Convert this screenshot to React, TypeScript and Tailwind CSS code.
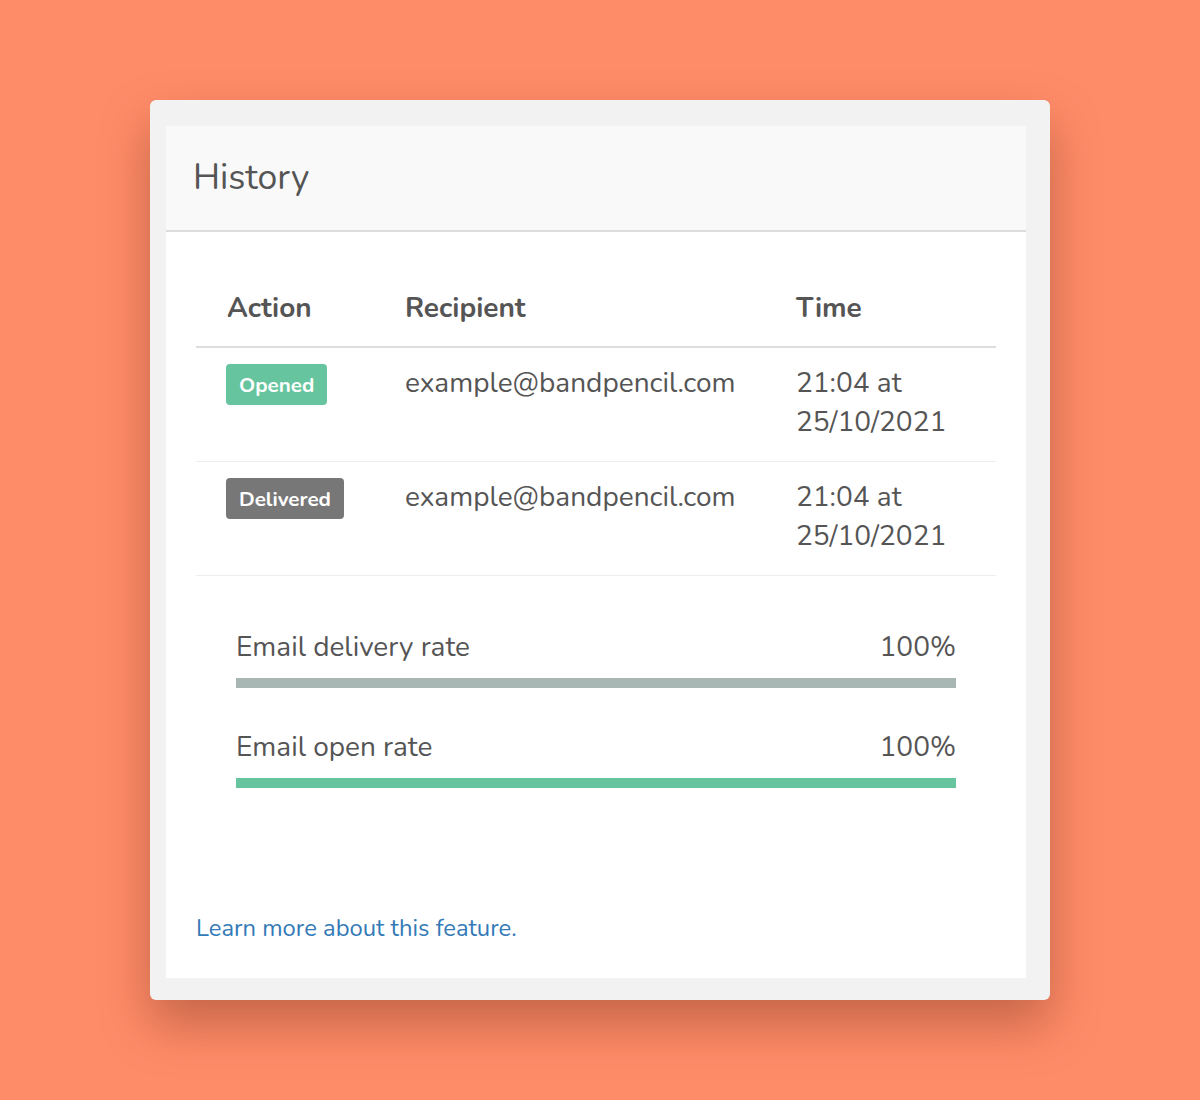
import React from "react";

const rows = [
  { action: "Opened", tone: "bg-[#66c49e]", email: "example@bandpencil.com", time: "21:04 at", date: "25/10/2021" },
  { action: "Delivered", tone: "bg-[#777777]", email: "example@bandpencil.com", time: "21:04 at", date: "25/10/2021" },
];

const rates = [
  { label: "Email delivery rate", value: 100, bar: "bg-[#a9b7b4]" },
  { label: "Email open rate", value: 100, bar: "bg-[#66c49e]" },
];

const App = () => {
  return (
    <div
      className="min-h-[1100px] w-full bg-[#ff8c69] flex justify-center pt-[100px]"
      style={{ fontFamily: '"Nunito", "Lato", "Noto Sans", sans-serif' }}
    >
      <div className="w-[900px] h-[900px] rounded-md bg-[#f2f2f2] pt-[26px] pl-[16px] pr-[24px] pb-[22px] shadow-[0_24px_50px_rgba(90,30,10,0.35)]">
        <div className="h-full flex flex-col bg-white">
          <div className="h-[106px] shrink-0 bg-[#f9f9f9] border-b-2 border-[#dddddd] flex items-center pl-[27px]">
            <h2 className="text-[35.6px] text-[#555555] leading-none">History</h2>
          </div>

          <div className="flex-1 flex flex-col px-[30px]">
            <div className="pt-[56px]">
              <div className="grid grid-cols-[178px_391px_1fr] border-b-2 border-[#dddddd] pb-[18px] text-[28px] leading-[40px] font-bold text-[#555555]">
                <div className="pl-[31px]">Action</div>
                <div className="pl-[31px]">Recipient</div>
                <div className="pl-[31px]">Time</div>
              </div>
              {rows.map((r, i) => (
                <div
                  key={i}
                  className="grid grid-cols-[178px_391px_1fr] border-b border-[#eeeeee] pt-[16px] pb-[19px] text-[28px] leading-[39px] text-[#555555]"
                >
                  <div className="pl-[30px] flex items-start">
                    <span className={`flex items-center h-[41px] px-[13px] pt-[2px] rounded-[4px] text-white text-[20.6px] font-bold leading-none ${r.tone}`}>
                      {r.action}
                    </span>
                  </div>
                  <div className="pl-[31px]">{r.email}</div>
                  <div className="pl-[31px]">
                    <div>{r.time}</div>
                    <div>{r.date}</div>
                  </div>
                </div>
              ))}
            </div>

            <div className="px-[40px] mt-[52px]">
              {rates.map((r, i) => (
                <div key={i} className={i > 0 ? "mt-[40px]" : ""}>
                  <div className="flex justify-between text-[28px] leading-[39px] text-[#555555]">
                    <span>{r.label}</span>
                    <span>{r.value}%</span>
                  </div>
                  <div className="mt-[11px] h-[10px] bg-[#eeeeee]">
                    <div className={`h-full ${r.bar}`} style={{ width: `${r.value}%` }} />
                  </div>
                </div>
              ))}
            </div>

            <div className="mt-auto pb-[33px]">
              <a href="#" className="text-[23.8px] leading-[33px] text-[#337ab7]">
                Learn more about this feature.
              </a>
            </div>
          </div>
        </div>
      </div>
    </div>
  );
};

export default App;
